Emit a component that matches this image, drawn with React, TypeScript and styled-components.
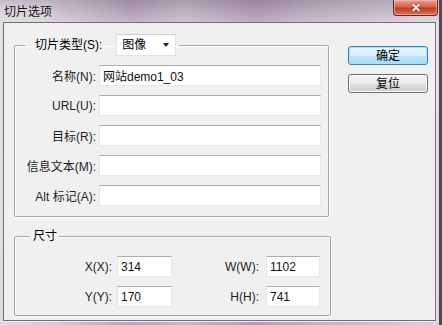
import React from 'react';
import styled, { createGlobalStyle } from 'styled-components';

const Global = createGlobalStyle`
	html, body {
		margin: 0;
		padding: 0;
		overflow: hidden;
		background: #c8bec9;
	}
	* {
		box-sizing: border-box;
	}
`;

const font = `"Liberation Sans", "Noto Sans CJK SC", sans-serif`;

const Window = styled.div`
	width: 442px;
	height: 325px;
	display: flex;
	flex-direction: column;
	font-family: ${font};
	font-size: 12px;
	color: #000;
	background:
		linear-gradient(to bottom, rgba(90, 70, 95, 0.18) 0, rgba(255, 255, 255, 0.25) 22px, rgba(255, 255, 255, 0.1) 100%),
		linear-gradient(to right, #dcd7dd 0%, #cfc6d1 12%, #ad9bb1 30%, #bdb0c0 42%, #a692aa 58%, #b9abbb 72%, #c6bac8 86%, #d6cfd8 100%);
	border-right: 3px solid #4f4a50;
`;

const TitleBar = styled.div`
	height: 22px;
	display: flex;
	align-items: center;
	justify-content: space-between;
	padding-left: 4px;
	h1 {
		margin: 0 0 2px 0;
		font-size: 12px;
		font-weight: normal;
		color: #111;
		text-shadow: 0 0 6px rgba(255, 255, 255, 0.9);
	}
`;

const CloseBtn = styled.div`
	align-self: flex-start;
	width: 45px;
	height: 16px;
	margin-right: 1px;
	display: flex;
	align-items: center;
	justify-content: center;
	border: 1px solid #6d2418;
	border-top: none;
	border-radius: 0 0 4px 4px;
	background: linear-gradient(to bottom, #e6a193 0%, #d4634c 45%, #c13a22 55%, #d8765e 100%);
	box-shadow: inset 0 0 0 1px rgba(255, 210, 200, 0.5);
	color: #fff;
	font-size: 12px;
	font-weight: bold;
	text-shadow: 0 0 2px #5a1a10;
	line-height: 1;
`;

const Frame = styled.div`
	flex: 1;
	display: flex;
	padding: 0 3px 4px 3px;
`;

const Body = styled.div`
	flex: 1;
	display: flex;
	gap: 17px;
	padding: 11px 0 0 10px;
	background: #f0f0f0;
	border: 1px solid #6f6b70;
	box-shadow: 1px 0 0 #f4eef4, 0 1px 0 #f4eef4;
`;

const LeftCol = styled.div`
	width: 317px;
	display: flex;
	flex-direction: column;
	align-items: flex-start;
`;

const Group = styled.fieldset<{ $w: number; $top?: number }>`
	width: ${({ $w }) => $w}px;
	margin: ${({ $top }) => $top ?? 0}px 0 0 0;
	padding: 0;
	min-inline-size: 0;
	border: 1px solid #a3a3a3;
	border-radius: 2px;
	box-shadow: inset 1px 1px 0 #fff, 1px 1px 0 #fff;
`;

const Legend = styled.legend<{ $ml: number; $pl: number; $pr: number }>`
	margin-left: ${({ $ml }) => $ml}px;
	padding: 0 ${({ $pr }) => $pr}px 0 ${({ $pl }) => $pl}px;
	line-height: 16px;
	display: flex;
	align-items: center;
`;

const LegendLabel = styled.span`
	margin-right: 14px;
`;

const Select = styled.div`
	width: 60px;
	height: 22px;
	display: flex;
	align-items: center;
	justify-content: space-between;
	padding: 0 6px 0 5px;
	background: #fff;
	border: 1px solid #e2e2e2;
	border-top-color: #cfcfcf;
	span {
		width: 0;
		height: 0;
		border-left: 3.5px solid transparent;
		border-right: 3.5px solid transparent;
		border-top: 4px solid #222;
	}
`;

const Form = styled.div`
	display: grid;
	grid-template-columns: 84px 222px;
	row-gap: 9px;
	padding: 9px 0 10px 0;
	align-items: center;
`;

const SizeGrid = styled.div`
	display: grid;
	grid-template-columns: 98px 55px 86px 54px;
	column-gap: 4px;
	row-gap: 9px;
	padding: 12px 0 8px 0;
	align-items: center;
`;

const Label = styled.label<{ $pr?: number }>`
	text-align: right;
	padding-right: ${({ $pr }) => $pr ?? 3}px;
	white-space: nowrap;
	color: #1e1e1e;
`;

const Field = styled.input`
	height: 21px;
	width: 100%;
	margin: 0;
	padding: 0 3px;
	font-family: ${font};
	font-size: 12px;
	color: #111;
	background: #fff;
	border: 1px solid #e3e9ef;
	border-top-color: #abadb3;
	border-left-color: #e2e3ea;
	outline: none;
`;

const ButtonCol = styled.div`
	display: flex;
	flex-direction: column;
	gap: 9px;
	padding-top: 12px;
`;

const Button = styled.button<{ $primary?: boolean }>`
	width: 80px;
	height: 19px;
	padding: 0;
	font-family: ${font};
	font-size: 12px;
	line-height: 1;
	color: #000;
	border-radius: 3px;
	border: 1px solid ${({ $primary }) => ($primary ? '#3c7fb1' : '#707070')};
	background: ${({ $primary }) =>
		$primary
			? 'linear-gradient(to bottom, #eaf6fd 0%, #d9f0fc 50%, #bee6fd 51%, #a7d9f5 100%)'
			: 'linear-gradient(to bottom, #f2f2f2 0%, #ebebeb 50%, #dddddd 51%, #cfcfcf 100%)'};
	box-shadow: inset 0 0 0 1px ${({ $primary }) => ($primary ? '#a6e2f8' : '#fbfbfb')};
`;

const fields = [
	{ label: '名称(N):', value: '网站demo1_03' },
	{ label: 'URL(U):', value: '' },
	{ label: '目标(R):', value: '' },
	{ label: '信息文本(M):', value: '' },
	{ label: 'Alt 标记(A):', value: '' },
];

const App: React.FunctionComponent = () => {
	return (
		<Window>
			<Global />
			<TitleBar>
				<h1>切片选项</h1>
				<CloseBtn>✕</CloseBtn>
			</TitleBar>
			<Frame>
				<Body>
					<LeftCol>
						<Group $w={315}>
							<Legend $ml={10} $pl={10} $pr={3}>
								<LegendLabel>切片类型(S):</LegendLabel>
								<Select>
									图像
									<span></span>
								</Select>
							</Legend>
							<Form>
								{fields.map((item, index) => (
									<React.Fragment key={index}>
										<Label>{item.label}</Label>
										<Field readOnly defaultValue={item.value} />
									</React.Fragment>
								))}
							</Form>
						</Group>
						<Group $w={317} $top={11}>
							<Legend $ml={15} $pl={3} $pr={2}>
								尺寸
							</Legend>
							<SizeGrid>
								<Label $pr={1}>X(X):</Label>
								<Field readOnly defaultValue="314" />
								<Label $pr={3}>W(W):</Label>
								<Field readOnly defaultValue="1102" />
								<Label $pr={1}>Y(Y):</Label>
								<Field readOnly defaultValue="170" />
								<Label $pr={3}>H(H):</Label>
								<Field readOnly defaultValue="741" />
							</SizeGrid>
						</Group>
					</LeftCol>
					<ButtonCol>
						<Button $primary>确定</Button>
						<Button>复位</Button>
					</ButtonCol>
				</Body>
			</Frame>
		</Window>
	);
};

export default App;
